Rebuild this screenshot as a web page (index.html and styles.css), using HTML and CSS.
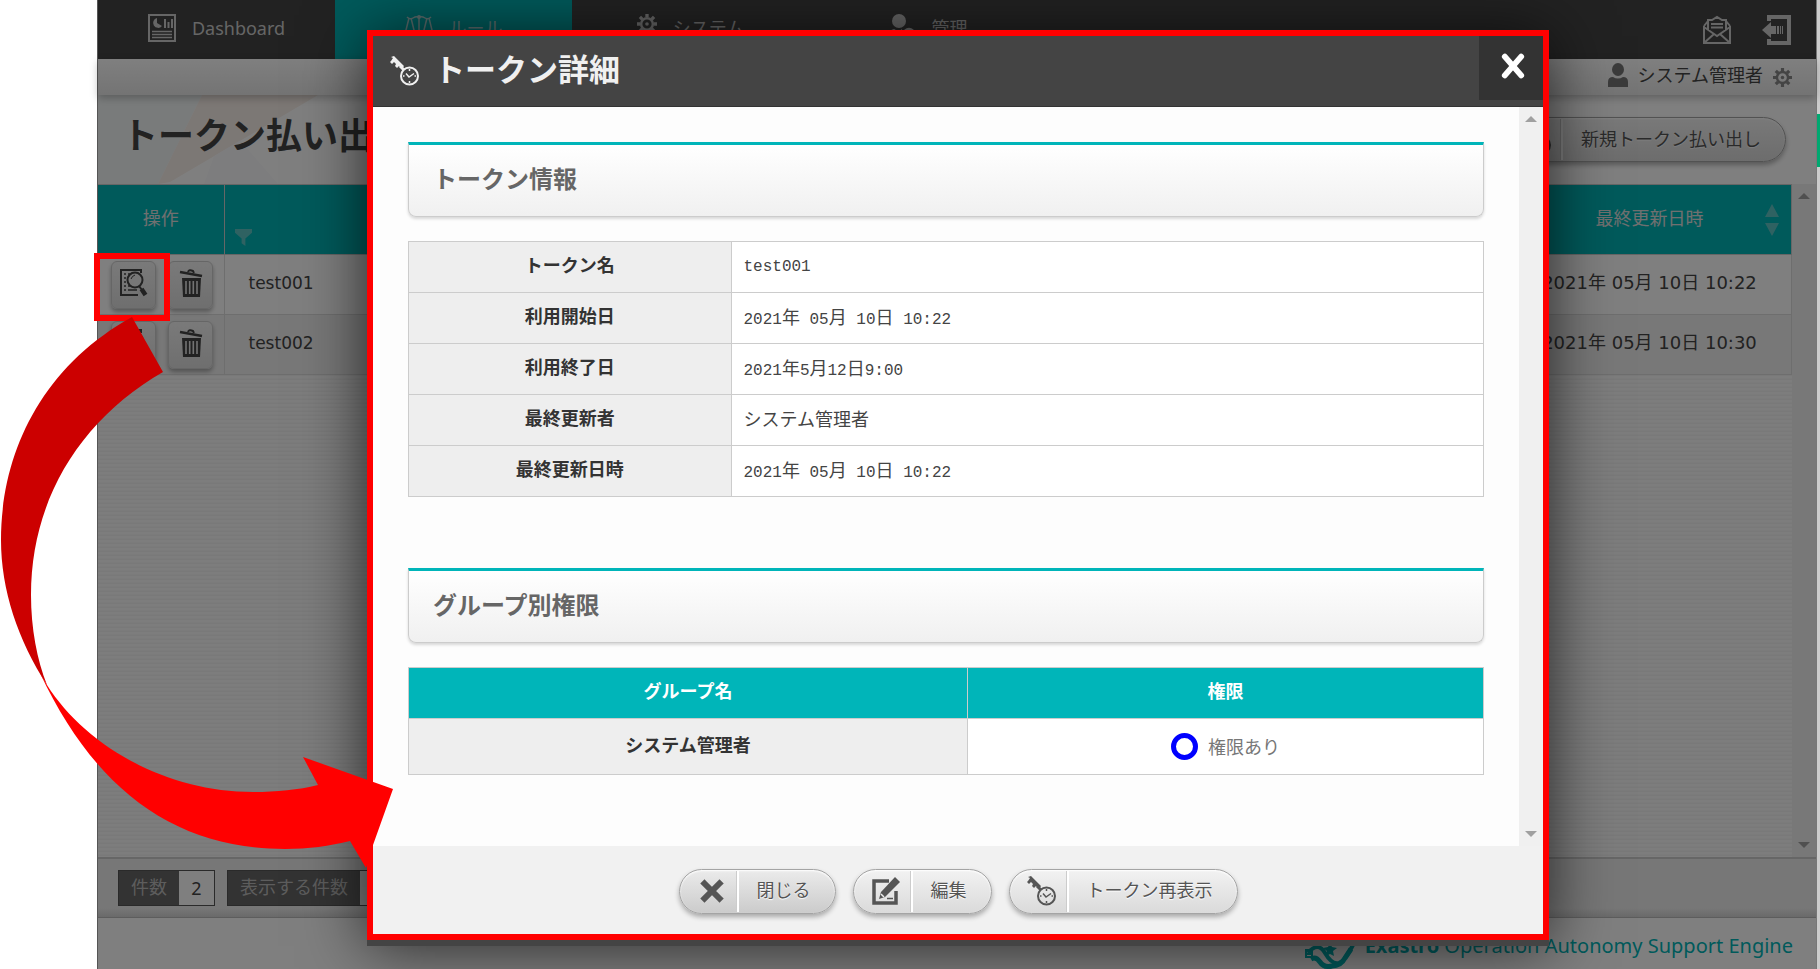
FILE: index.html
```html
<!DOCTYPE html>
<html lang="ja">
<head>
<meta charset="utf-8">
<title>トークン払い出し</title>
<link rel="stylesheet" href="styles.css">
</head>
<body>
<svg class="sprite" aria-hidden="true">
  <symbol id="key" viewBox="0 0 30 30">
    <path d="M1 5 3 2 1 1 4 0 14 10 12 13 9 10 7 12 5 10 6 8 4 6 2 8 0 6Z" fill="currentColor"/>
    <path d="M10 10 14 14" stroke="currentColor" stroke-width="3"/>
    <circle cx="19.500" cy="20" r="8.500" fill="none" stroke="currentColor" stroke-width="2"/>
    <path d="M16 17.500 19 21 24 17.500" fill="none" stroke="currentColor" stroke-width="1.500"/>
    <path d="M19.500 13v2M19.500 25v2M13 20h1.500M24.500 20h1.500" stroke="currentColor" stroke-width="1.500"/>
  </symbol>
  <symbol id="cross" viewBox="0 0 24 24">
    <path d="M4.500 4.500 19.500 19.500M19.500 4.500 4.500 19.500" stroke="currentColor" stroke-width="6" stroke-linecap="square" stroke-linejoin="round"/>
  </symbol>
  <symbol id="gear" viewBox="0 0 24 24">
    <circle cx="12" cy="12" r="7" fill="none" stroke="currentColor" stroke-width="3"/>
    <circle cx="12" cy="12" r="2.200" fill="currentColor"/>
    <path d="M12 0v4M12 20v4M0 12h4M20 12h4M3.500 3.500l3 3M17.500 17.500l3 3M20.500 3.500l-3 3M6.500 17.500l-3 3" stroke="currentColor" stroke-width="4"/>
  </symbol>
  <symbol id="person" viewBox="0 0 20 24">
    <ellipse cx="10" cy="6.500" rx="6" ry="6.500" fill="currentColor"/>
    <path d="M0 24v-5q0-5 5-5 5 3 10 0 5 0 5 5v5Z" fill="currentColor"/>
  </symbol>
  <symbol id="trash" viewBox="0 0 24 28">
    <path d="M1 3 23 7" stroke="currentColor" stroke-width="2.500"/>
    <path d="M9 3q1-3 5-1l1 2" fill="none" stroke="currentColor" stroke-width="2"/>
    <path d="M3 9h19l-1 19H4Z" fill="currentColor"/>
    <path d="M7 12v13M10.700 12v13M14.300 12v13M18 12v13" stroke="#e6e6e6" stroke-width="1.600"/>
  </symbol>
  <symbol id="detail" viewBox="0 0 28 28">
    <path d="M21 4V1H1v25h17" fill="none" stroke="currentColor" stroke-width="2"/>
    <path d="M4 5h2M4 9h2M4 13h2M4 17h2M4 21h2M8 5h3M8 21h9M8 17h3" stroke="currentColor" stroke-width="1.500"/>
    <circle cx="15" cy="11" r="7.500" fill="#eee" stroke="currentColor" stroke-width="2"/>
    <path d="M11 10q1-3 4-4" fill="none" stroke="currentColor"/>
    <path d="M19 17 22 21" stroke="currentColor" stroke-width="2"/>
    <path d="M21.500 20 25.500 26" stroke="currentColor" stroke-width="4.500"/>
  </symbol>
</svg>

<div class="app">
  <header class="nav">
    <nav class="tabs">
      <a class="tab" href="#">
        <svg class="ico28" viewBox="0 0 28 28"><rect x="1" y="1" width="26" height="26" fill="none" stroke="currentColor" stroke-width="2"/><path d="M9 4a5 5 0 1 0 5 8L9 9Z M16 5h2v9h-2ZM19.500 8h2v6h-2ZM23 5h2v9h-2Z" fill="currentColor"/><path d="M4 17.500h20M4 20.500h20M4 23.500h20" stroke="currentColor" stroke-width="1.500"/></svg>
        <span>Dashboard</span>
      </a>
      <a class="tab active" href="#">
        <svg class="ico28" viewBox="0 0 28 28"><path d="M14 2v24M2 3q3 3 6 1t6-1q3-1 6 1t6-1M4 4 0 20h10L6 4M22 4l-4 16h10L24 4M8 27h12" fill="none" stroke="currentColor" stroke-width="1.500"/><circle cx="14" cy="3" r="2" fill="currentColor"/></svg>
        <span>ルール</span>
      </a>
      <a class="tab" href="#"><svg class="ico20 raised"><use href="#gear"/></svg><span>システム</span></a>
      <a class="tab" href="#">
        <svg class="ico28" viewBox="0 0 28 28"><ellipse cx="11" cy="7" rx="7" ry="7" fill="currentColor"/><path d="M1 26v-5q0-5 5-6 5 3 8 0v11Z" fill="currentColor"/><circle cx="21" cy="20" r="5" fill="none" stroke="currentColor" stroke-width="2.500"/></svg>
        <span>管理</span>
      </a>
    </nav>
    <div class="nav-actions">
      <button type="button" aria-label="メール"><svg class="ico30" viewBox="0 0 30 30"><path d="M2 11v17h26V11M2 11 6 6M28 11 24 6M6 15V5h4l5-3 5 3h4v10M2 28l10-9M28 28l-10-9M2 12l13 9 13-9" fill="none" stroke="currentColor" stroke-width="2"/><path d="M9 9h12M9 12.500h12" stroke="currentColor" stroke-width="2"/></svg></button>
      <button type="button" aria-label="ログアウト"><svg class="ico30" viewBox="0 0 30 30"><path d="M7 6V2h20v26H7v-4" fill="none" stroke="currentColor" stroke-width="4"/><path d="M0 15 9 7v4h5v8H9v4Z M15 11h2v8h-2ZM18 11h1v8h-1ZM20 11h1v8h-1Z" fill="currentColor"/></svg></button>
    </div>
  </header>
  <div class="userbar">
    <svg class="user-ico"><use href="#person"/></svg>
    <span>システム管理者</span>
    <svg class="gear-ico"><use href="#gear"/></svg>
  </div>
  <section class="title-row">
    <svg class="title-art" viewBox="0 0 230 90" preserveAspectRatio="none"><path d="M0 0H104L60 90H0Z" fill="#f3f7f7"/><path d="M104 0H220L72 88 60 90Z" fill="#f9f0ea"/><path d="M142 46 116 62 106 90H180Z" fill="#fafafd"/></svg>
    <h1>トークン払い出し</h1>
    <button class="pill" type="button"><span class="pill-ico"><svg class="ico30"><use href="#key"/></svg></span><span class="pill-text">新規トークン払い出し</span></button>
  </section>
  <main class="list">
    <div class="list-table">
      <table class="grid">
        <thead>
          <tr>
            <th class="col-op">操作</th>
            <th class="col-name"><svg class="filter" viewBox="0 0 18 18"><path d="M0 0h18v4l-7 6v8l-4-3v-5L0 4Z" fill="currentColor"/></svg></th>
            <th class="col-date"><div class="sort-head"><span>最終更新日時</span><svg class="sort" viewBox="0 0 14 32"><path d="M7 0l7 13H0ZM7 32l7-13H0Z" fill="currentColor"/></svg></div></th>
          </tr>
        </thead>
        <tbody>
          <tr>
            <td class="op-cell"><div class="ops"><button type="button" aria-label="詳細"><svg class="ico28"><use href="#detail"/></svg></button><button type="button" aria-label="削除"><svg class="ico28"><use href="#trash"/></svg></button></div></td>
            <td class="name">test001</td><td class="date">2021年 05月 10日 10:22</td>
          </tr>
          <tr>
            <td class="op-cell"><div class="ops"><button type="button" aria-label="詳細"><svg class="ico28"><use href="#detail"/></svg></button><button type="button" aria-label="削除"><svg class="ico28"><use href="#trash"/></svg></button></div></td>
            <td class="name">test002</td><td class="date">2021年 05月 10日 10:30</td>
          </tr>
        </tbody>
      </table>
    </div>
    <div class="scroll"><i class="up"></i><i class="down"></i></div>
  </main>
  <div class="pager">
    <div class="count"><span class="count-label">件数</span><span class="count-value">2</span></div>
    <div class="count"><label class="count-label" for="rows">表示する件数</label><select id="rows" class="count-value"><option>100</option></select></div>
  </div>
  <footer class="brand">
    <svg class="logo" viewBox="0 0 50 50"><path d="M3 32Q13 20 20 32T34 42Q40 40 49 22" fill="none" stroke="currentColor" stroke-width="4"/><path d="M6 38q5-3 9 3t12 4q9 0 13-8l6-9" fill="none" stroke="currentColor" stroke-width="5"/><path d="M25 22l2 4 5 1-4 3 1 5-4-2-4 2 1-5-4-3 5-1Z" fill="currentColor"/><path d="M1 29h6v7H1ZM1 33h6" fill="none" stroke="currentColor" stroke-width="2"/></svg>
    <span><b>Exastro</b> Operation Autonomy Support Engine</span>
  </footer>

  <div class="shade"></div>
</div>
<div class="edge"><div class="edge-mark"></div></div>

<div class="highlight"></div>

<section class="modal" role="dialog" aria-labelledby="modal-title">
  <header class="modal-head">
    <svg class="ico30"><use href="#key"/></svg>
    <h2 id="modal-title">トークン詳細</h2>
    <button class="close" type="button" aria-label="閉じる"><svg class="ico28" viewBox="0 0 24 24"><path d="M5 4 19 20M19 4 5 20" stroke="currentColor" stroke-width="5" stroke-linecap="round"/></svg></button>
  </header>
  <div class="modal-body">
    <div class="content">
      <h3>トークン情報</h3>
      <table class="info">
        <tr><th scope="row">トークン名</th><td>test001</td></tr>
        <tr><th scope="row">利用開始日</th><td>2021<span class="ja">年</span> 05<span class="ja">月</span> 10<span class="ja">日</span> 10:22</td></tr>
        <tr><th scope="row">利用終了日</th><td>2021<span class="ja">年</span>5<span class="ja">月</span>12<span class="ja">日</span>9:00</td></tr>
        <tr><th scope="row">最終更新者</th><td><span class="ja">システム管理者</span></td></tr>
        <tr><th scope="row">最終更新日時</th><td>2021<span class="ja">年</span> 05<span class="ja">月</span> 10<span class="ja">日</span> 10:22</td></tr>
      </table>
      <h3>グループ別権限</h3>
      <table class="perm">
        <thead><tr><th scope="col" class="col-group">グループ名</th><th scope="col">権限</th></tr></thead>
        <tbody><tr><th scope="row">システム管理者</th><td><div class="allowed"><i class="ring"></i><span>権限あり</span></div></td></tr></tbody>
      </table>
    </div>
    <div class="scroll"><i class="up"></i><i class="down"></i></div>
  </div>
  <footer class="modal-foot">
    <button class="pill pressed" type="button"><span class="pill-ico"><svg class="ico24"><use href="#cross"/></svg></span><span class="pill-text">閉じる</span></button>
    <button class="pill" type="button"><span class="pill-ico"><svg class="ico28" viewBox="0 0 28 28"><path d="M17 4H2v22h22V14" fill="none" stroke="currentColor" stroke-width="3.500"/><path d="M23 0l5 5-15 15-6 2 2-7Z" fill="currentColor"/><path d="M9 17l3 3" stroke="#eee" stroke-width="1.500"/><path d="M15 21.500h6" stroke="currentColor" stroke-width="1.500"/></svg></span><span class="pill-text">編集</span></button>
    <button class="pill" type="button"><span class="pill-ico"><svg class="ico30"><use href="#key"/></svg></span><span class="pill-text">トークン再表示</span></button>
  </footer>
</section>

<svg class="arrow" viewBox="0 0 400 880" aria-hidden="true">
  <path fill="#c00" d="M132 317C40 368 1 455 1 540 1 590 18 640 47 685 37 660 31 628 31 595 31 500 80 420 163 372Z"/>
  <path fill="#f00" d="M47 685C85 745 165 792 253 792 276 792 298 790 318 785L303 757 393 789 373 845 366 868 350 841C330 846 308 849 285 849 175 849 95 790 40 673Z"/>
</svg>
</body>
</html>
```

FILE: styles.css
```css
* { box-sizing: border-box; }
html, body { height: 100%; }
body {
  margin: 0;
  display: flex;
  padding-left: 97px;
  background: #fff;
  color: #333;
  font: 18px/28px "Noto Sans", "Noto Sans CJK JP", sans-serif;
  overflow: hidden;
}
button, select { font: inherit; color: inherit; }
button { padding: 0; cursor: pointer; }
a { color: inherit; text-decoration: none; }
svg { display: block; flex: none; }
table { border-collapse: collapse; width: 100%; }
.sprite { position: absolute; width: 0; height: 0; }
.ico20 { width: 20px; height: 20px; }
.ico24 { width: 24px; height: 24px; }
.ico28 { width: 28px; height: 28px; }
.ico30 { width: 30px; height: 30px; }

.app {
  position: relative;
  z-index: 0;
  flex: 1;
  min-width: 0;
  height: 100%;
  display: flex;
  flex-direction: column;
  background: #fff;
  color: #444;
  border-left: 1px solid #aaa;
}
.shade { position: absolute; z-index: 2; inset: 0 0 0 -1px; background: rgba(0, 0, 0, .5); }
.edge { width: 4px; background: #ccc; padding-top: 114px; border-left: 1px solid #777; }
.edge-mark { height: 53px; background: #00a870; }

.nav { display: flex; justify-content: space-between; height: 59px; background: #444; color: #ccc; }
.tabs { display: flex; }
.tab {
  display: flex;
  align-items: center;
  justify-content: center;
  gap: 16px;
  width: 237px;
  height: 59px;
  padding-bottom: 4px;
}
.tab.active { background: #00b4b6; color: #b4d8d8; }
.raised { margin-bottom: 8px; }
.nav-actions { display: flex; align-items: center; gap: 30px; padding-right: 24px; }
.nav-actions button { border: 0; background: none; }

.userbar {
  position: relative;
  z-index: 1;
  display: flex;
  align-items: center;
  justify-content: flex-end;
  gap: 10px;
  height: 36px;
  padding-right: 24px;
  padding-bottom: 4px;
  background: linear-gradient(#fff, #e8e8e8);
  box-shadow: 0 3px 8px rgba(0, 0, 0, .25);
}
.user-ico { width: 20px; height: 24px; color: #777; }
.gear-ico { width: 19px; height: 19px; color: #888; margin-top: 4px; }

.title-row {
  position: relative;
  display: flex;
  align-items: center;
  justify-content: space-between;
  height: 89px;
  padding: 0 30px 0 24px;
}
.title-art { position: absolute; left: 0; top: 0; width: 230px; height: 89px; }
h1 { position: relative; margin: 0 0 8px; font-size: 36px; line-height: 48px; }

.pill {
  display: flex;
  align-items: center;
  height: 45px;
  border: 1px solid #a4a4a4;
  border-radius: 23px;
  background: linear-gradient(#f2f2f2, #dadada);
  box-shadow: 0 3px 5px rgba(0, 0, 0, .3), inset 0 1px 2px #fff;
  color: #555;
  text-shadow: 0 1px 1px #fff;
}
.pill.pressed { background: linear-gradient(#ebebeb, #cbcbcb); }
.pill-ico {
  display: flex;
  align-items: center;
  justify-content: center;
  width: 59px;
  height: 41px;
  padding-left: 8px;
  border-right: 2px solid #fff;
  box-shadow: inset -1px 0 0 #ccc;
}
.pill-text { padding: 0 24px 2px 18px; }

.list {
  flex: 1;
  display: flex;
  min-height: 0;
  background: repeating-linear-gradient(#fafafa 0, #fafafa 2px, #f3f3f3 3px, #f3f3f3 4px);
}
.list-table { flex: 1; min-width: 0; }
.scroll {
  display: flex;
  flex-direction: column;
  justify-content: space-between;
  align-items: center;
  width: 24px;
  padding: 9px 0;
  background: #f0f0f0;
}
.up, .down { border: 6px solid transparent; }
.up { border-top: 0; border-bottom-color: #a0a0a0; }
.down { border-bottom: 0; border-top-color: #a0a0a0; }

.grid { table-layout: fixed; }
.grid th { height: 70px; background: #00b4b6; color: #e0e0e0; font-weight: 400; border: 1px solid #ccc; border-left: 0; }
.grid td { height: 60px; padding: 0 0 4px; background: #fff; border: 1px solid #ddd; border-left: 0; }
.grid tr:nth-child(2) td { background: #f0f0f0; }
.grid .op-cell { padding: 0; }
.col-op { width: 126px; padding-bottom: 4px; }
.col-date { width: 284px; padding: 0 12px; }
.grid .col-name { vertical-align: bottom; padding: 0 10px 8px; }
.filter { width: 17px; height: 17px; color: #5fc4c5; }
.sort-head { display: flex; align-items: center; }
.sort-head span { flex: 1; padding-left: 14px; padding-bottom: 4px; }
.sort { width: 14px; height: 32px; color: #5fc4c5; }
.grid .name, .grid .date { font-family: "DejaVu Sans", "Noto Sans CJK JP", sans-serif; }
.grid .name { padding-left: 24px; font-size: 17px; }
.grid .date { text-align: center; }
.ops { display: flex; gap: 12px; padding-left: 13px; }
.ops button {
  display: flex;
  align-items: center;
  justify-content: center;
  width: 45px;
  height: 48px;
  border: 1px solid #ccc;
  border-radius: 6px;
  background: linear-gradient(#f4f4f4, #dedede);
  box-shadow: 0 3px 4px rgba(0, 0, 0, .3);
  padding-bottom: 4px;
}

.pager {
  display: flex;
  align-items: center;
  gap: 12px;
  height: 60px;
  padding-left: 20px;
  border-top: 2px solid #ccc;
  background: linear-gradient(#eee 85%, #d4d4d4);
}
.count { display: flex; height: 36px; border: 1px solid #555; background: #fff; }
.count-label { padding: 2px 12px 0; background: #666; color: #bbb; }
.count-value { width: 35px; padding: 3px 0 0; text-align: center; border: 0; background: #fff; }
select.count-value { width: 80px; }

.brand {
  display: flex;
  align-items: center;
  justify-content: flex-end;
  gap: 10px;
  height: 52px;
  padding: 4px 23px 0 0;
  border-top: 1px solid #bbb;
  color: #00b4b6;
  font-size: 20px;
}
.logo { width: 50px; height: 50px; }

.highlight { position: absolute; left: 94px; top: 253px; width: 76px; height: 68px; border: 6px solid #f00; }

.modal {
  position: absolute;
  inset: 30px 271px 29px 367px;
  display: flex;
  flex-direction: column;
  border: 6px solid #f00;
  background: #fdfdfd;
  box-shadow: 0 6px 0 #444, 0 6px 60px rgba(0, 0, 0, .7);
}
.modal-head { display: flex; align-items: center; height: 71px; padding-left: 17px; background: #444; border-bottom: 1px solid #333; color: #f0f0f0; }
.modal-head h2 { flex: 1; margin: 0; padding: 0 0 4px 14px; font-size: 31px; line-height: 40px; }
.close {
  display: flex;
  align-items: center;
  justify-content: center;
  align-self: flex-start;
  width: 64px;
  height: 64px;
  padding: 0 0 4px 4px;
  border: 0;
  background: #333;
  color: #fff;
}
.modal-body { flex: 1; min-height: 0; display: flex; }
.content { flex: 1; min-width: 0; padding: 35px; }
h3 {
  margin: 0 0 24px;
  padding: 16px 24px 20px;
  border: 1px solid #ccc;
  border-top: 3px solid #00b5b9;
  border-radius: 0 0 8px 8px;
  background: linear-gradient(#fff, #f0f0f0);
  box-shadow: 0 2px 3px rgba(0, 0, 0, .15);
  color: #666;
  font-size: 24px;
  line-height: 35px;
}
.info { margin-bottom: 71px; }
.info th, .info td, .perm th, .perm td { border: 1px solid #ccc; }
.info th { width: 30%; height: 51px; padding: 0 0 4px; background: #eee; color: #333; }
.info td { padding: 0 12px; background: #fff; font: 16px/24px "Liberation Mono", "Noto Sans CJK JP", monospace; color: #444; }
.ja { font: 18px/24px "Noto Sans CJK JP", sans-serif; }
.perm thead th { height: 51px; padding: 0 0 4px; background: #00b5b9; color: #fff; }
.perm .col-group { width: 52%; }
.perm tbody th { height: 56px; padding: 0 0 4px; background: #eee; color: #333; }
.perm td { padding: 0; background: #fff; color: #777; }
.allowed { display: flex; align-items: center; justify-content: center; gap: 10px; }
.ring { width: 27px; height: 27px; border: 5px solid #00f; border-radius: 50%; }
.modal-foot { display: flex; justify-content: center; align-items: center; gap: 17px; height: 88px; padding-top: 2px; background: #f1f1f1; }

.arrow { position: absolute; left: 0; top: 0; width: 400px; height: 880px; pointer-events: none; }
```
